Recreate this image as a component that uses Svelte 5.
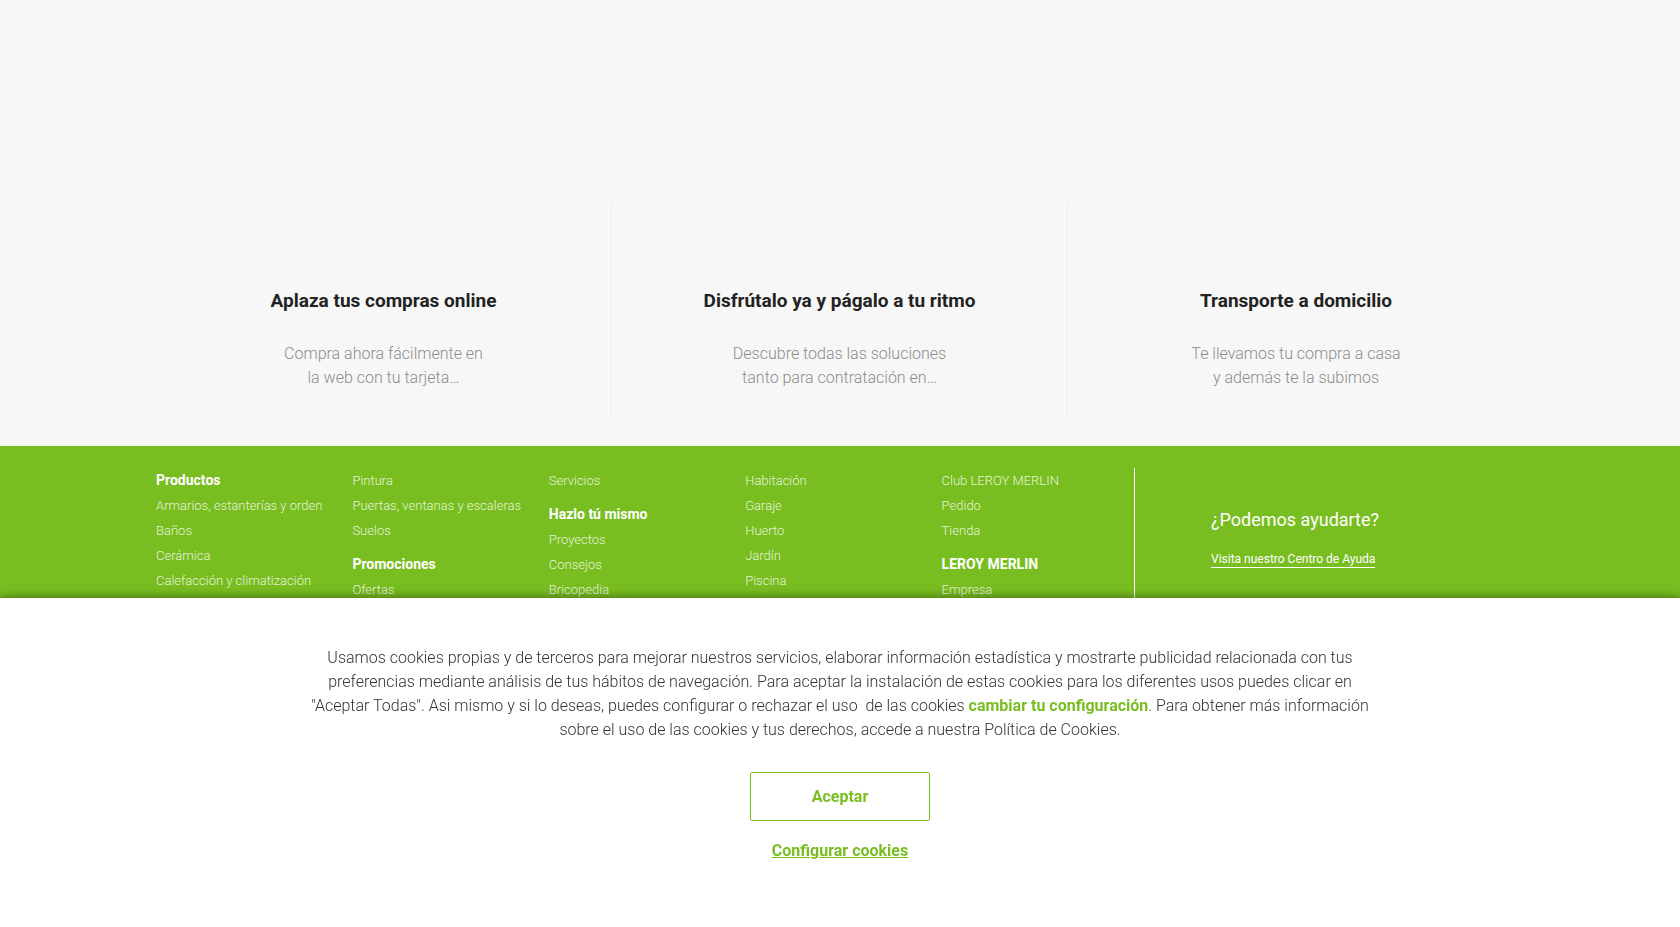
<script>
  const features = [
    { title: 'Aplaza tus compras online', lines: ['Compra ahora fácilmente en', 'la web con tu tarjeta…'] },
    { title: 'Disfrútalo ya y págalo a tu ritmo', lines: ['Descubre todas las soluciones', 'tanto para contratación en…'] },
    { title: 'Transporte a domicilio', lines: ['Te llevamos tu compra a casa', 'y además te la subimos'] },
  ];

  const columns = [
    [{ heading: 'Productos', links: ['Armarios, estanterías y orden', 'Baños', 'Cerámica', 'Calefacción y climatización'] }],
    [
      { links: ['Pintura', 'Puertas, ventanas y escaleras', 'Suelos'] },
      { heading: 'Promociones', links: ['Ofertas'] },
    ],
    [
      { links: ['Servicios'] },
      { heading: 'Hazlo tú mismo', links: ['Proyectos', 'Consejos', 'Bricopedia'] },
    ],
    [{ links: ['Habitación', 'Garaje', 'Huerto', 'Jardín', 'Piscina'] }],
    [
      { links: ['Club LEROY MERLIN', 'Pedido', 'Tienda'] },
      { heading: 'LEROY MERLIN', links: ['Empresa'] },
    ],
  ];
</script>

<div class="page">
  <main class="features">
    {#each features as feature}
      <section class="feature">
        <h2>{feature.title}</h2>
        <p>{feature.lines[0]}<br />{feature.lines[1]}</p>
      </section>
    {/each}
  </main>

  <footer>
    <div class="footer-inner">
      <nav class="links">
        {#each columns as column}
          <div class="column">
            {#each column as group}
              <div class="group">
                {#if group.heading}<h3>{group.heading}</h3>{/if}
                <ul>
                  {#each group.links as link}
                    <li><a href="#top">{link}</a></li>
                  {/each}
                </ul>
              </div>
            {/each}
          </div>
        {/each}
      </nav>
      <aside class="help">
        <p>¿Podemos ayudarte?</p>
        <a href="#top">Visita nuestro Centro de Ayuda</a>
      </aside>
    </div>
  </footer>

  <section class="cookies">
    <p>
      Usamos cookies propias y de terceros para mejorar nuestros servicios, elaborar información estadística y mostrarte publicidad relacionada con tus<br />
      preferencias mediante análisis de tus hábitos de navegación. Para aceptar la instalación de estas cookies para los diferentes usos puedes clicar en<br />
      "Aceptar Todas". Asi mismo y si lo deseas, puedes configurar o rechazar el uso&nbsp; de las cookies <a href="#top">cambiar tu configuración</a>. Para obtener más información<br />
      sobre el uso de las cookies y tus derechos, accede a nuestra Política de Cookies.
    </p>
    <button type="button" class="accept">Aceptar</button>
    <button type="button" class="configure">Configurar cookies</button>
  </section>
</div>

<style>
  :global(body) {
    margin: 0;
    background: #f7f7f7;
    font-family: Roboto, 'Liberation Sans', sans-serif;
  }
  h2, h3, p, ul {
    margin: 0;
    padding: 0;
  }
  ul {
    list-style: none;
  }
  .page {
    display: flex;
    flex-direction: column;
    min-height: 100vh;
    color: #222;
  }
  .features {
    display: grid;
    grid-template-columns: repeat(3, 1fr);
    width: 100%;
    max-width: 1368px;
    margin: 0 auto;
    padding: 204px 0 29px;
  }
  .feature {
    padding: 85px 24px 27px;
    text-align: center;
  }
  .feature:not(:last-child) {
    border-right: 1px solid #ebebeb;
  }
  .feature h2 {
    margin-bottom: 29px;
    font-size: 19px;
    line-height: 24px;
    font-weight: 700;
  }
  .feature p {
    font-size: 16px;
    line-height: 24px;
    font-weight: 300;
    color: #8c8c8c;
  }
  footer {
    flex: 1;
    display: flex;
    background: #78be20;
    color: #fff;
  }
  .footer-inner {
    display: flex;
    width: 100%;
    max-width: 1368px;
    margin: 0 auto;
    padding-top: 22px;
  }
  .links {
    display: grid;
    grid-template-columns: repeat(5, 1fr);
    width: 982px;
  }
  .group + .group {
    margin-top: 9px;
  }
  h3 {
    font-size: 14px;
    line-height: 25px;
    font-weight: 700;
  }
  .links a {
    display: block;
    font-size: 13px;
    line-height: 25px;
    font-weight: 300;
    white-space: nowrap;
    color: rgba(255, 255, 255, 0.85);
    text-decoration: none;
  }
  .help {
    flex: 1;
    margin-left: -4px;
    padding: 40px 0 0 76px;
    border-left: 1px solid #fff;
  }
  .help p {
    margin-bottom: 16px;
    font-size: 18px;
    line-height: 24px;
  }
  .help a {
    display: inline-block;
    border-bottom: 1px solid #fff;
    font-size: 12px;
    line-height: 16px;
    color: #fff;
    text-decoration: none;
  }
  .cookies {
    position: fixed;
    right: 0;
    bottom: 0;
    left: 0;
    display: flex;
    flex-direction: column;
    align-items: center;
    padding: 48px 24px 64px;
    background: #fff;
    box-shadow: 0 0 10px rgba(0, 0, 0, 0.5);
    color: #333;
  }
  .cookies p {
    font-size: 16px;
    line-height: 24px;
    font-weight: 300;
    text-align: center;
  }
  .cookies p a {
    font-weight: 700;
    color: #78be20;
    text-decoration: none;
  }
  button {
    font-family: inherit;
    font-size: 16px;
    line-height: 24px;
    font-weight: 700;
    color: #78be20;
    background: none;
    cursor: pointer;
  }
  .accept {
    width: 180px;
    height: 49px;
    margin: 30px 0 18px;
    padding: 0 12px;
    border: 1px solid #78be20;
    border-radius: 2px;
    background: #fff;
  }
  .configure {
    padding: 0;
    border: 0;
    text-decoration: underline;
  }
</style>
